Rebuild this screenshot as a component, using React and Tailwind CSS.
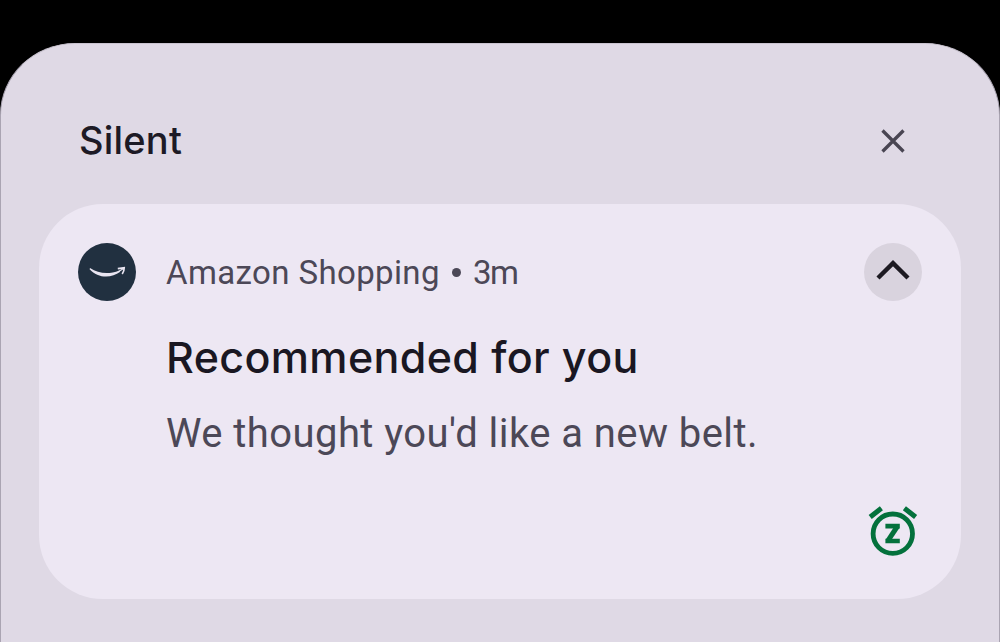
import { clsx } from "clsx";

function AmazonIcon() {
  return (
    <svg viewBox="0 0 58 58" className="size-[58px] shrink-0">
      <circle cx="29" cy="29" r="29" fill="#213040" />
      <path d="M12 25.1C21 30.9 31 31.6 41.3 27.4L42.3 28.8C33 35.6 20 35.4 11.6 26.2Z" fill="#e9e5f1" />
      <path d="M39.8 25.6L46.2 24.8Q46.2 28.2 44.2 31" fill="none" stroke="#e9e5f1" strokeWidth="1.7" />
      <path d="M41 28.2L45.6 25.4" stroke="#e9e5f1" strokeWidth="1.2" />
    </svg>
  );
}

function SnoozeIcon() {
  return (
    <svg viewBox="0 0 50 50" className="size-[50px]" fill="none" stroke="#04713c">
      <circle cx="24.8" cy="27.7" r="19.7" strokeWidth="4.8" />
      <path d="M2.2 11L13.4 2.2M36.4 2.2L47.6 11" strokeWidth="5" />
      <path d="M17.4 20.1H31.8M17.4 35H31.8" strokeWidth="4.6" />
      <path d="M29.3 20.5L20 34.6" strokeWidth="5" />
    </svg>
  );
}

function Text({ className, children }) {
  return (
    <span className={clsx("block whitespace-nowrap leading-none", className)}>
      {children}
    </span>
  );
}

export default function App() {
  return (
    <div className="h-[642px] w-[1000px] overflow-hidden bg-black pt-[43px] font-['Inter',sans-serif]">
      <div className="h-[599px] rounded-t-[75px_72px] border-x border-t border-[#aaa4b2] border-t-[#c9c3cf] bg-[#dfd9e5] px-[38px]">
        <header className="flex h-[160px] items-start justify-between pl-[40px] pr-[56px]">
          <Text className="pt-[77px] text-[38px] font-medium tracking-[0.2px] text-[#1d1a25]">Silent</Text>
          <button className="mt-[85px]" aria-label="Clear">
            <svg viewBox="0 0 24 24" className="size-6" fill="none" stroke="#494552" strokeWidth="3.3">
              <path d="M1.5 1.5L22.5 22.5M22.5 1.5L1.5 22.5" />
            </svg>
          </button>
        </header>

        <section className="flex h-[395px] items-start rounded-[64px] bg-[#ede7f3] px-[39px] pt-[39px]">
          <AmazonIcon />
          <div className="ml-[30px] flex-1 font-['Roboto',sans-serif]">
            <div className="flex h-[58px] items-center text-[33px] text-[#4c4857]">
              <Text className="tracking-[0.38px]">Amazon Shopping</Text>
              <span className="mx-[12px] size-[9px] rounded-full bg-[#4c4857]" />
              <Text className="tracking-[-1.5px]">3m</Text>
            </div>
            <Text className="mt-[35px] font-['Inter',sans-serif] text-[43px] font-medium tracking-[0.37px] text-[#1a1722]">
              Recommended for you
            </Text>
            <Text className="mt-[35px] text-[40px] tracking-[0.43px] text-[#4c4857]">
              We thought you'd like a new belt.
            </Text>
          </div>
          <div className="flex h-[313px] w-[58px] flex-col items-center justify-between">
            <button className="flex size-[58px] items-center justify-center rounded-full bg-[#d9d3de]" aria-label="Collapse">
              <svg viewBox="0 0 34 20" className="mb-1 h-5 w-[34px]" fill="none" stroke="#1d1a22" strokeWidth="4.4">
                <path d="M2 18L17 3.2L32 18" />
              </svg>
            </button>
            <SnoozeIcon />
          </div>
        </section>
      </div>
    </div>
  );
}
